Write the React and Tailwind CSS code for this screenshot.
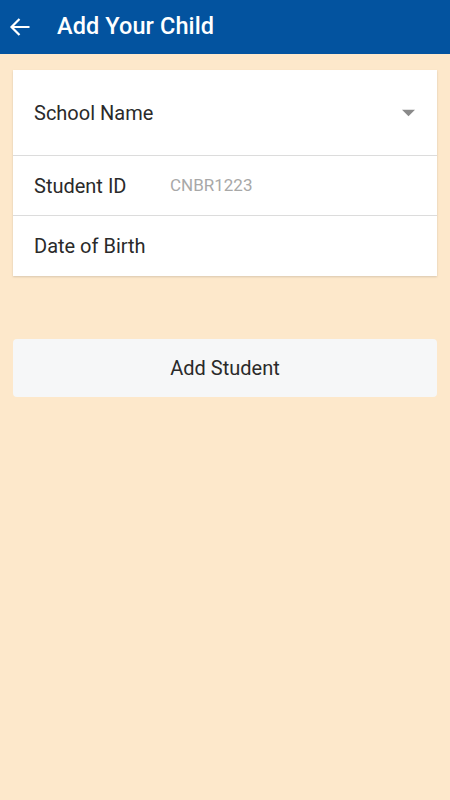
import React from 'react';

const Row = ({ children, className = '' }) => (
  <div className={`flex items-center px-[21px] ${className}`}>{children}</div>
);

export default function App() {
  return (
    <div className="min-h-[800px] w-[450px] bg-[#fde8cb] font-['Roboto',sans-serif]">
      <header className="flex h-[54px] items-center bg-[#03539f] text-white">
        <svg className="ml-[8px] h-[24px] w-[24px]" viewBox="0 0 24 24" fill="none" stroke="white" strokeWidth="2.2">
          <path d="M21.5 12H3.5M11.5 4l-8 8 8 8" />
        </svg>
        <h1 className="ml-[25px] text-[23.5px] font-medium tracking-[0.1px]">Add Your Child</h1>
      </header>

      <div className="px-[13px] pt-[16px]">
        <div className="bg-white shadow-[0_1px_2px_rgba(0,0,0,0.15)]">
          <Row className="h-[86px] justify-between border-b border-[#dcdcdc]">
            <span className="text-[20px] text-[#2a2a2a]">School Name</span>
            <svg className="mr-[1px] h-[8px] w-[13px]" viewBox="0 0 10 5">
              <path d="M0 0h10L5 5z" fill="#8a8a8a" />
            </svg>
          </Row>
          <Row className="h-[60px] border-b border-[#dcdcdc]">
            <span className="w-[136px] text-[20px] text-[#2a2a2a]">Student ID</span>
            <span className="text-[17px] text-[#a8a8a8]">CNBR1223</span>
          </Row>
          <Row className="h-[60px]">
            <span className="text-[20px] text-[#2a2a2a]">Date of Birth</span>
          </Row>
        </div>

        <button className="mt-[63px] flex h-[58px] w-full items-center justify-center rounded-[4px] bg-[#f6f7f8] text-[20px] text-[#2a2a2a]">
          Add Student
        </button>
      </div>
    </div>
  );
}
